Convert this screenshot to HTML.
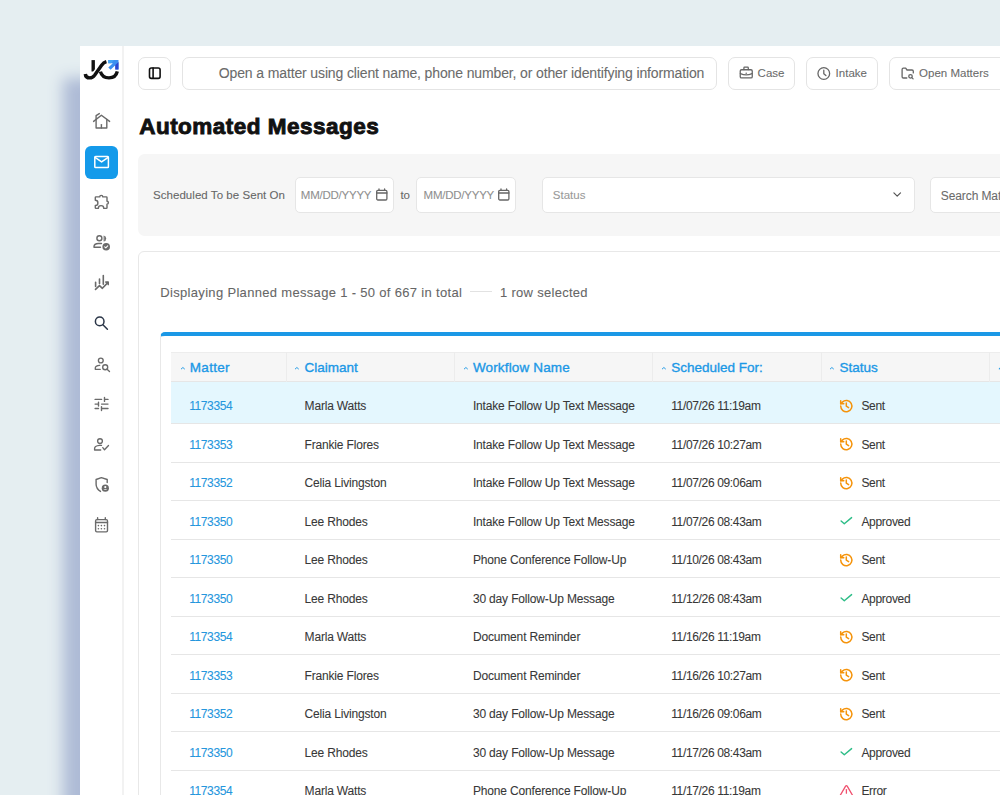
<!DOCTYPE html>
<html><head><meta charset="utf-8">
<style>
*{box-sizing:border-box;margin:0;padding:0}
html,body{width:1000px;height:795px;overflow:hidden;background:#e5eef1;font-family:"Liberation Sans",sans-serif;position:relative}
.a{position:absolute}
.t{position:absolute;white-space:nowrap;-webkit-text-stroke:0.08px currentColor}
.b{position:absolute;border:1px solid #e4e4e4;border-radius:7px;background:#fff}
.i{position:absolute;border:1px solid #e6e6e6;border-radius:5px;background:#fff}
svg{overflow:visible}
</style></head>
<body>
<div class="a" style="left:80px;top:46px;width:960px;height:820px;box-shadow:-17px 32px 14px #aebbd6;background:#fff"></div>
<div class="a" style="left:122px;top:46px;width:2px;height:760px;background:#f2f2f2"></div>
<svg class="a" style="left:80px;top:52px;width:44px;height:36px" viewBox="0 0 44 36" fill="none" stroke="#6a6a6a" stroke-width="1.4" stroke-linecap="round" stroke-linejoin="round">
<path d="M11.5 8.1 H14.9 V19.5 H11.5 Z" fill="#111" stroke="none"/>
<path d="M13.2 23.8 L21.8 12.6" stroke="#fff" stroke-width="5.2" stroke-linecap="butt"/>
<path d="M5.3 22 Q5.6 25.9 9.8 25.9 Q12.6 25.9 14.6 23.2 L21.6 13.2 Q23.6 10.4 26.4 9.6" stroke="#111" stroke-width="3.4" stroke-linecap="butt"/>
<path d="M20.4 19.6 Q22.2 25.9 29 25.9 Q35.8 25.9 37.3 19.4" stroke="#111" stroke-width="3.4" stroke-linecap="butt"/>
<path d="M28.3 8.1 H38.5 V17.6 H35.3 V13.2 L30.6 17.8 L28.3 15.5 L32.8 11.2 H28.3 Z" fill="#3b8ff0" stroke="none"/>
<path d="M28.3 8.1 H34 L31 11.2 H28.3 Z" fill="#42a5f5" stroke="none"/>
<path d="M35.3 13.1 L38.5 10 V17.6 H35.3 Z" fill="#2b46cf" stroke="none"/>
</svg>
<svg class="a" style="left:89px;top:109px;width:24px;height:24px" viewBox="0 0 24 24" fill="none" stroke="#6a6a6a" stroke-width="1.4" stroke-linecap="round" stroke-linejoin="round"><path d="M4.6 12.4 L12.4 6.3 L20.6 12.4"/><path d="M7.1 10.5 V19 H17.8 V10.5"/><path d="M12.4 15.6 V19"/><path d="M7.1 10.3 V6.7 L10.3 4.6"/></svg>
<div class="a" style="left:85px;top:146px;width:33px;height:32.5px;border-radius:6px;background:#149aea"></div>
<svg class="a" style="left:89px;top:150px;width:24px;height:24px" viewBox="0 0 24 24" fill="none" stroke="#fff" stroke-width="1.5" stroke-linecap="round" stroke-linejoin="round"><rect x="5.8" y="6.6" width="13.6" height="11" rx="0.8"/><path d="M6 7.3 L12.6 11.9 L19.2 7.3"/></svg>
<svg class="a" style="left:89px;top:190px;width:24px;height:24px" viewBox="0 0 24 24" fill="none" stroke="#6a6a6a" stroke-width="1.4" stroke-linecap="round" stroke-linejoin="round"><path d="M7 6.9 H10.7 A1.55 1.55 0 0 1 13.8 6.9 H17.3 Q18 6.9 18 7.6 V11.3 A1.4 1.4 0 0 1 18 14.1 V17.7 Q18 18.4 17.3 18.4 H14.8 A2.75 2.75 0 0 0 9.3 18.4 H7 Q6.3 18.4 6.3 17.7 V15.5 A2.6 2.6 0 0 0 6.3 10.3 V7.6 Q6.3 6.9 7 6.9 Z"/></svg>
<svg class="a" style="left:89px;top:230px;width:24px;height:24px" viewBox="0 0 24 24" fill="none" stroke="#6a6a6a" stroke-width="1.4" stroke-linecap="round" stroke-linejoin="round"><circle cx="10.4" cy="8.3" r="2.5"/><path d="M14.6 5.5 A3.1 3.1 0 0 1 14.6 11.6 Z" fill="#6a6a6a" stroke="none"/><path d="M15.6 6.7 V10.4" stroke="#9a9a9a" stroke-width="0.7"/><path d="M12.5 13.5 H9.5 Q5 13.8 5 16.6 V17.3 H11.5"/><circle cx="17.2" cy="16.8" r="3.8" fill="#6a6a6a" stroke="none"/><path d="M15.7 16.9 L16.8 17.9 L18.7 15.9" stroke="#fff" stroke-width="1.1"/></svg>
<svg class="a" style="left:89px;top:271px;width:24px;height:24px" viewBox="0 0 24 24" fill="none" stroke="#6a6a6a" stroke-width="1.6" stroke-linecap="round" stroke-linejoin="round"><path d="M6.6 11.2 V15.4 M10.5 8 V12.6 M14.3 4.6 V13.3"/><path d="M6.5 18.4 L10.5 14.6 L13.4 17.3 L18.8 11.6"/><path d="M16.8 11.1 H19.2 V13.6"/></svg>
<svg class="a" style="left:89px;top:311px;width:24px;height:24px" viewBox="0 0 24 24" fill="none" stroke="#2b3648" stroke-width="1.5" stroke-linecap="round" stroke-linejoin="round"><circle cx="10.7" cy="10.4" r="4.3"/><path d="M13.9 13.7 L18.4 18.2"/></svg>
<svg class="a" style="left:89px;top:351px;width:24px;height:24px" viewBox="0 0 24 24" fill="none" stroke="#6a6a6a" stroke-width="1.35" stroke-linecap="round" stroke-linejoin="round"><circle cx="11.8" cy="9.5" r="2.4"/><path d="M10.7 14.3 Q6.3 14.6 6.3 17 V18.3 H11.3"/><circle cx="16.2" cy="16.2" r="2.5"/><path d="M18.1 18.2 L20.5 20.5"/></svg>
<svg class="a" style="left:89px;top:392px;width:24px;height:24px" viewBox="0 0 24 24" fill="none" stroke="#6a6a6a" stroke-width="1.4" stroke-linecap="round" stroke-linejoin="round"><path d="M6.1 7.4 H12.6 M15.5 7.4 H19 M15.5 5.5 V9.4 M6.1 12.1 H9.5 M9.5 10.3 V14 M12.6 12.1 H19 M6.1 16.5 H9.5 M12.5 14.6 V18.5 M12.5 16.5 H19"/></svg>
<svg class="a" style="left:89px;top:432px;width:24px;height:24px" viewBox="0 0 24 24" fill="none" stroke="#6a6a6a" stroke-width="1.35" stroke-linecap="round" stroke-linejoin="round"><circle cx="11" cy="9.1" r="2.4"/><path d="M12.5 13.4 H10.5 Q5.6 13.8 5.6 16.6 V18 H11.7"/><path d="M13.8 15.6 L15.5 17.8 L19.5 13.5"/></svg>
<svg class="a" style="left:89px;top:472px;width:24px;height:24px" viewBox="0 0 24 24" fill="none" stroke="#6a6a6a" stroke-width="1.4" stroke-linecap="round" stroke-linejoin="round"><path d="M11.5 19.4 Q7.1 16.5 7.1 12.2 V7.5 L12.4 5.6 L18.2 7.5 V10.6"/><circle cx="16.3" cy="16.2" r="3.6" fill="#6a6a6a" stroke="none"/><circle cx="16.3" cy="15.1" r="1.1" fill="#fff" stroke="none"/><path d="M14.4 17.9 Q16.3 15.9 18.2 17.9" fill="#ddd" stroke="none"/></svg>
<svg class="a" style="left:89px;top:513px;width:24px;height:24px" viewBox="0 0 24 24" fill="none" stroke="#6a6a6a" stroke-width="1.4" stroke-linecap="round" stroke-linejoin="round"><rect x="6.6" y="6.6" width="11.9" height="12.3" rx="1.3"/><path d="M6.6 9.5 H18.5 M8.6 4.8 V6.6 M16.3 4.8 V6.6"/><path d="M9.4 12.6 h.01 M12.4 12.6 h.01 M15.5 12.6 h.01 M9.4 15.7 h.01 M12.4 15.7 h.01 M15.5 15.7 h.01" stroke-width="1.6"/></svg>
<div class="b" style="left:138px;top:57px;width:33px;height:32.5px"></div>
<svg class="a" style="left:142px;top:61px;width:24px;height:24px" viewBox="0 0 24 24" fill="none" stroke="#111" stroke-width="1.6" stroke-linecap="round" stroke-linejoin="round"><rect x="7.5" y="6.95" width="10.6" height="10.4" rx="1.8"/><path d="M11.1 7 V17.3"/></svg>
<div class="b" style="left:182px;top:57px;width:535px;height:32.5px"></div>
<div class="t" style="left:218.8px;top:66.35px;font-size:14px;line-height:14px;color:#6b6b6b;letter-spacing:-0.13px">Open a matter using client name, phone number, or other identifying information</div>
<div class="b" style="left:728px;top:57px;width:67px;height:32.5px"></div>
<svg class="a" style="left:734px;top:61px;width:24px;height:24px" viewBox="0 0 24 24" fill="none" stroke="#666" stroke-width="1.3" stroke-linecap="round" stroke-linejoin="round"><rect x="6.25" y="8.75" width="12" height="8.2" rx="1.3"/><path d="M9.9 8.6 V6.9 Q9.9 6.2 10.6 6.2 H13.6 Q14.3 6.2 14.3 6.9 V8.6"/><path d="M6.4 12.6 Q12.2 15.1 18 12.6"/><path d="M12.2 12.3 h.01" stroke-width="1.5"/></svg>
<div class="t" style="left:757.6px;top:68.07px;font-size:11.5px;line-height:11.5px;color:#6b6b6b">Case</div>
<div class="b" style="left:806px;top:57px;width:72px;height:32.5px"></div>
<svg class="a" style="left:812px;top:62px;width:24px;height:24px" viewBox="0 0 24 24" fill="none" stroke="#666" stroke-width="1.3" stroke-linecap="round" stroke-linejoin="round"><circle cx="11.8" cy="11.5" r="5.85"/><path d="M11.8 8.2 V11.7 L13.9 13.6"/></svg>
<div class="t" style="left:835.6px;top:67.87px;font-size:11.5px;line-height:11.5px;color:#6b6b6b">Intake</div>
<div class="b" style="left:889px;top:57px;width:130px;height:32.5px"></div>
<svg class="a" style="left:896px;top:61px;width:24px;height:24px" viewBox="0 0 24 24" fill="none" stroke="#666" stroke-width="1.3" stroke-linecap="round" stroke-linejoin="round"><path d="M10.8 17 H7.4 Q6.1 17 6.1 15.7 V8.5 Q6.1 7.2 7.4 7.2 H9.7 L11 9 H16 Q17.3 9 17.3 10.3 V11.9"/><circle cx="14.5" cy="15.3" r="1.75"/><path d="M15.8 16.6 L17.1 17.9"/></svg>
<div class="t" style="left:919.1px;top:67.87px;font-size:11.5px;line-height:11.5px;color:#6b6b6b">Open Matters</div>
<div class="t" style="left:139.2px;top:115.55px;font-size:22.5px;line-height:22.5px;color:#111;font-weight:bold;letter-spacing:0.48px;-webkit-text-stroke:0.9px #111">Automated Messages</div>
<div class="a" style="left:138px;top:154px;width:880px;height:82px;background:#f6f6f6;border-radius:6.5px"></div>
<div class="t" style="left:153px;top:189.77px;font-size:11.5px;line-height:11.5px;color:#666;letter-spacing:0.05px">Scheduled To be Sent On</div>
<div class="i" style="left:295px;top:177px;width:99px;height:35.5px"></div>
<div class="t" style="left:300.8px;top:189.77px;font-size:11.5px;line-height:11.5px;color:#8f8f8f;letter-spacing:-0.24px">MM/DD/YYYY</div>
<svg class="a" style="left:374.5px;top:188px;width:14px;height:14px" viewBox="0 0 14 14" fill="none" stroke="#666" stroke-width="1.3" stroke-linecap="round" stroke-linejoin="round"><rect x="1.7" y="2.4" width="10.2" height="9.6" rx="1.2"/><path d="M1.7 5 H11.9 M4 1 V2.4 M9.6 1 V2.4"/></svg>
<div class="t" style="left:400.4px;top:189.77px;font-size:11.5px;line-height:11.5px;color:#666">to</div>
<div class="i" style="left:416px;top:177px;width:100px;height:35.5px"></div>
<div class="t" style="left:423.6px;top:189.77px;font-size:11.5px;line-height:11.5px;color:#8f8f8f;letter-spacing:-0.24px">MM/DD/YYYY</div>
<svg class="a" style="left:497px;top:188px;width:14px;height:14px" viewBox="0 0 14 14" fill="none" stroke="#666" stroke-width="1.3" stroke-linecap="round" stroke-linejoin="round"><rect x="1.7" y="2.4" width="10.2" height="9.6" rx="1.2"/><path d="M1.7 5 H11.9 M4 1 V2.4 M9.6 1 V2.4"/></svg>
<div class="i" style="left:541.5px;top:177px;width:373px;height:35.5px"></div>
<div class="t" style="left:552.8px;top:189.77px;font-size:11.5px;line-height:11.5px;color:#999">Status</div>
<svg class="a" style="left:890px;top:188px;width:14px;height:14px" viewBox="0 0 14 14" fill="none" stroke="#555" stroke-width="1.2" stroke-linecap="round" stroke-linejoin="round"><path d="M3.9 4.9 L7.2 8.2 L10.5 4.9"/></svg>
<div class="i" style="left:930px;top:177px;width:100px;height:35.5px"></div>
<div class="t" style="left:940.8px;top:189.64px;font-size:12px;line-height:12px;color:#6b6b6b;letter-spacing:-0.1px">Search Matter</div>
<div class="a" style="left:138px;top:251px;width:900px;height:600px;border:1px solid #e8e8e8;border-radius:6px"></div>
<div class="t" style="left:160.3px;top:285.60px;font-size:13px;line-height:13px;color:#666;letter-spacing:0.32px">Displaying Planned message 1 - 50 of 667 in total</div>
<div class="a" style="left:470px;top:290.6px;width:22px;height:1.6px;background:#e2e2e2"></div>
<div class="t" style="left:500px;top:285.60px;font-size:13px;line-height:13px;color:#666;letter-spacing:0.29px">1 row selected</div>
<div class="a" style="left:160px;top:331.5px;width:900px;height:600px;border-left:1px solid #e8e8e8;border-top:4px solid #1b98e6;border-top-left-radius:5px"></div>
<div class="a" style="left:171px;top:351.5px;width:860px;height:30px;background:#f6f6f6;border-top:1px solid #ededed;border-bottom:1px solid #e6e6e6"></div>
<div class="a" style="left:286px;top:352px;width:1px;height:29.5px;background:#ececec"></div>
<div class="a" style="left:454px;top:352px;width:1px;height:29.5px;background:#ececec"></div>
<div class="a" style="left:652px;top:352px;width:1px;height:29.5px;background:#ececec"></div>
<div class="a" style="left:821px;top:352px;width:1px;height:29.5px;background:#ececec"></div>
<div class="a" style="left:989px;top:352px;width:1px;height:29.5px;background:#ececec"></div>
<svg class="a" style="left:179.60000000000002px;top:366.3px;width:6px;height:5px" viewBox="0 0 6 5" fill="none" stroke="#1b98e6" stroke-width="0.95" stroke-linecap="round" stroke-linejoin="round"><path d="M1.3 2.9 L2.9 1.5 L4.5 2.9"/></svg>
<div class="t" style="left:189.8px;top:360.77px;font-size:13.5px;line-height:13.5px;color:#1b98e6;letter-spacing:0.3px;-webkit-text-stroke:0.35px #1b98e6">Matter</div>
<svg class="a" style="left:294.40000000000003px;top:366.3px;width:6px;height:5px" viewBox="0 0 6 5" fill="none" stroke="#1b98e6" stroke-width="0.95" stroke-linecap="round" stroke-linejoin="round"><path d="M1.3 2.9 L2.9 1.5 L4.5 2.9"/></svg>
<div class="t" style="left:304.6px;top:360.77px;font-size:13.5px;line-height:13.5px;color:#1b98e6;-webkit-text-stroke:0.35px #1b98e6">Claimant</div>
<svg class="a" style="left:462.7px;top:366.3px;width:6px;height:5px" viewBox="0 0 6 5" fill="none" stroke="#1b98e6" stroke-width="0.95" stroke-linecap="round" stroke-linejoin="round"><path d="M1.3 2.9 L2.9 1.5 L4.5 2.9"/></svg>
<div class="t" style="left:472.9px;top:360.77px;font-size:13.5px;line-height:13.5px;color:#1b98e6;letter-spacing:0.15px;-webkit-text-stroke:0.35px #1b98e6">Workflow Name</div>
<svg class="a" style="left:661.0px;top:366.3px;width:6px;height:5px" viewBox="0 0 6 5" fill="none" stroke="#1b98e6" stroke-width="0.95" stroke-linecap="round" stroke-linejoin="round"><path d="M1.3 2.9 L2.9 1.5 L4.5 2.9"/></svg>
<div class="t" style="left:671.2px;top:360.77px;font-size:13.5px;line-height:13.5px;color:#1b98e6;-webkit-text-stroke:0.35px #1b98e6">Scheduled For:</div>
<svg class="a" style="left:829.4px;top:366.3px;width:6px;height:5px" viewBox="0 0 6 5" fill="none" stroke="#1b98e6" stroke-width="0.95" stroke-linecap="round" stroke-linejoin="round"><path d="M1.3 2.9 L2.9 1.5 L4.5 2.9"/></svg>
<div class="t" style="left:839.6px;top:360.77px;font-size:13.5px;line-height:13.5px;color:#1b98e6;-webkit-text-stroke:0.35px #1b98e6">Status</div>
<svg class="a" style="left:997.5px;top:366.3px;width:6px;height:5px" viewBox="0 0 6 5" fill="none" stroke="#1b98e6" stroke-width="1.1" stroke-linecap="round" stroke-linejoin="round"><path d="M1.3 2.9 L2.9 1.5 L4.5 2.9"/></svg>
<div class="a" style="left:171px;top:381.5px;width:860px;height:42px;background:#e4f7fe"></div>
<div class="a" style="left:171px;top:423.30px;width:860px;height:1px;background:#e6e6e6"></div>
<div class="t" style="left:189.20000000000002px;top:400.44px;font-size:12px;line-height:12px;color:#2596dd;letter-spacing:-0.4px">1173354</div>
<div class="t" style="left:304.6px;top:400.44px;font-size:12px;line-height:12px;color:#383838;letter-spacing:-0.18px">Marla Watts</div>
<div class="t" style="left:472.9px;top:400.44px;font-size:12px;line-height:12px;color:#383838;letter-spacing:-0.16px">Intake Follow Up Text Message</div>
<div class="t" style="left:671.2px;top:400.44px;font-size:12px;line-height:12px;color:#383838;letter-spacing:-0.35px">11/07/26 11:19am</div>
<svg class="a" style="left:839.3px;top:398.8px;width:14px;height:14px" viewBox="0 0 14 14" fill="none" stroke="#f5930a" stroke-width="1.5" stroke-linecap="round" stroke-linejoin="round"><path d="M1.7 7.1 A5.6 5.6 0 1 0 3.4 3.1 L1.7 4.8"/><path d="M1.7 1.7 V4.8 H4.8"/><path d="M7.3 4.1 V7.2 L9.6 8.7"/></svg>
<div class="t" style="left:861.4px;top:400.44px;font-size:12px;line-height:12px;color:#383838;letter-spacing:-0.3px">Sent</div>
<div class="a" style="left:171px;top:461.80px;width:860px;height:1px;background:#e6e6e6"></div>
<div class="t" style="left:189.20000000000002px;top:438.94px;font-size:12px;line-height:12px;color:#2596dd;letter-spacing:-0.4px">1173353</div>
<div class="t" style="left:304.6px;top:438.94px;font-size:12px;line-height:12px;color:#383838;letter-spacing:-0.18px">Frankie Flores</div>
<div class="t" style="left:472.9px;top:438.94px;font-size:12px;line-height:12px;color:#383838;letter-spacing:-0.16px">Intake Follow Up Text Message</div>
<div class="t" style="left:671.2px;top:438.94px;font-size:12px;line-height:12px;color:#383838;letter-spacing:-0.35px">11/07/26 10:27am</div>
<svg class="a" style="left:839.3px;top:437.3px;width:14px;height:14px" viewBox="0 0 14 14" fill="none" stroke="#f5930a" stroke-width="1.5" stroke-linecap="round" stroke-linejoin="round"><path d="M1.7 7.1 A5.6 5.6 0 1 0 3.4 3.1 L1.7 4.8"/><path d="M1.7 1.7 V4.8 H4.8"/><path d="M7.3 4.1 V7.2 L9.6 8.7"/></svg>
<div class="t" style="left:861.4px;top:438.94px;font-size:12px;line-height:12px;color:#383838;letter-spacing:-0.3px">Sent</div>
<div class="a" style="left:171px;top:500.30px;width:860px;height:1px;background:#e6e6e6"></div>
<div class="t" style="left:189.20000000000002px;top:477.44px;font-size:12px;line-height:12px;color:#2596dd;letter-spacing:-0.4px">1173352</div>
<div class="t" style="left:304.6px;top:477.44px;font-size:12px;line-height:12px;color:#383838;letter-spacing:-0.18px">Celia Livingston</div>
<div class="t" style="left:472.9px;top:477.44px;font-size:12px;line-height:12px;color:#383838;letter-spacing:-0.16px">Intake Follow Up Text Message</div>
<div class="t" style="left:671.2px;top:477.44px;font-size:12px;line-height:12px;color:#383838;letter-spacing:-0.35px">11/07/26 09:06am</div>
<svg class="a" style="left:839.3px;top:475.8px;width:14px;height:14px" viewBox="0 0 14 14" fill="none" stroke="#f5930a" stroke-width="1.5" stroke-linecap="round" stroke-linejoin="round"><path d="M1.7 7.1 A5.6 5.6 0 1 0 3.4 3.1 L1.7 4.8"/><path d="M1.7 1.7 V4.8 H4.8"/><path d="M7.3 4.1 V7.2 L9.6 8.7"/></svg>
<div class="t" style="left:861.4px;top:477.44px;font-size:12px;line-height:12px;color:#383838;letter-spacing:-0.3px">Sent</div>
<div class="a" style="left:171px;top:538.80px;width:860px;height:1px;background:#e6e6e6"></div>
<div class="t" style="left:189.20000000000002px;top:515.94px;font-size:12px;line-height:12px;color:#2596dd;letter-spacing:-0.4px">1173350</div>
<div class="t" style="left:304.6px;top:515.94px;font-size:12px;line-height:12px;color:#383838;letter-spacing:-0.18px">Lee Rhodes</div>
<div class="t" style="left:472.9px;top:515.94px;font-size:12px;line-height:12px;color:#383838;letter-spacing:-0.16px">Intake Follow Up Text Message</div>
<div class="t" style="left:671.2px;top:515.94px;font-size:12px;line-height:12px;color:#383838;letter-spacing:-0.35px">11/07/26 08:43am</div>
<svg class="a" style="left:839.3px;top:514.3px;width:14px;height:14px" viewBox="0 0 14 14" fill="none" stroke="#2dbd87" stroke-width="1.4" stroke-linecap="round" stroke-linejoin="round"><path d="M12.6 3.6 L5.3 9.8 L2.1 6.9"/></svg>
<div class="t" style="left:861.4px;top:515.94px;font-size:12px;line-height:12px;color:#383838;letter-spacing:-0.3px">Approved</div>
<div class="a" style="left:171px;top:577.30px;width:860px;height:1px;background:#e6e6e6"></div>
<div class="t" style="left:189.20000000000002px;top:554.44px;font-size:12px;line-height:12px;color:#2596dd;letter-spacing:-0.4px">1173350</div>
<div class="t" style="left:304.6px;top:554.44px;font-size:12px;line-height:12px;color:#383838;letter-spacing:-0.18px">Lee Rhodes</div>
<div class="t" style="left:472.9px;top:554.44px;font-size:12px;line-height:12px;color:#383838;letter-spacing:-0.16px">Phone Conference Follow-Up</div>
<div class="t" style="left:671.2px;top:554.44px;font-size:12px;line-height:12px;color:#383838;letter-spacing:-0.35px">11/10/26 08:43am</div>
<svg class="a" style="left:839.3px;top:552.8px;width:14px;height:14px" viewBox="0 0 14 14" fill="none" stroke="#f5930a" stroke-width="1.5" stroke-linecap="round" stroke-linejoin="round"><path d="M1.7 7.1 A5.6 5.6 0 1 0 3.4 3.1 L1.7 4.8"/><path d="M1.7 1.7 V4.8 H4.8"/><path d="M7.3 4.1 V7.2 L9.6 8.7"/></svg>
<div class="t" style="left:861.4px;top:554.44px;font-size:12px;line-height:12px;color:#383838;letter-spacing:-0.3px">Sent</div>
<div class="a" style="left:171px;top:615.80px;width:860px;height:1px;background:#e6e6e6"></div>
<div class="t" style="left:189.20000000000002px;top:592.94px;font-size:12px;line-height:12px;color:#2596dd;letter-spacing:-0.4px">1173350</div>
<div class="t" style="left:304.6px;top:592.94px;font-size:12px;line-height:12px;color:#383838;letter-spacing:-0.18px">Lee Rhodes</div>
<div class="t" style="left:472.9px;top:592.94px;font-size:12px;line-height:12px;color:#383838;letter-spacing:-0.16px">30 day Follow-Up Message</div>
<div class="t" style="left:671.2px;top:592.94px;font-size:12px;line-height:12px;color:#383838;letter-spacing:-0.35px">11/12/26 08:43am</div>
<svg class="a" style="left:839.3px;top:591.3px;width:14px;height:14px" viewBox="0 0 14 14" fill="none" stroke="#2dbd87" stroke-width="1.4" stroke-linecap="round" stroke-linejoin="round"><path d="M12.6 3.6 L5.3 9.8 L2.1 6.9"/></svg>
<div class="t" style="left:861.4px;top:592.94px;font-size:12px;line-height:12px;color:#383838;letter-spacing:-0.3px">Approved</div>
<div class="a" style="left:171px;top:654.30px;width:860px;height:1px;background:#e6e6e6"></div>
<div class="t" style="left:189.20000000000002px;top:631.44px;font-size:12px;line-height:12px;color:#2596dd;letter-spacing:-0.4px">1173354</div>
<div class="t" style="left:304.6px;top:631.44px;font-size:12px;line-height:12px;color:#383838;letter-spacing:-0.18px">Marla Watts</div>
<div class="t" style="left:472.9px;top:631.44px;font-size:12px;line-height:12px;color:#383838;letter-spacing:-0.16px">Document Reminder</div>
<div class="t" style="left:671.2px;top:631.44px;font-size:12px;line-height:12px;color:#383838;letter-spacing:-0.35px">11/16/26 11:19am</div>
<svg class="a" style="left:839.3px;top:629.8px;width:14px;height:14px" viewBox="0 0 14 14" fill="none" stroke="#f5930a" stroke-width="1.5" stroke-linecap="round" stroke-linejoin="round"><path d="M1.7 7.1 A5.6 5.6 0 1 0 3.4 3.1 L1.7 4.8"/><path d="M1.7 1.7 V4.8 H4.8"/><path d="M7.3 4.1 V7.2 L9.6 8.7"/></svg>
<div class="t" style="left:861.4px;top:631.44px;font-size:12px;line-height:12px;color:#383838;letter-spacing:-0.3px">Sent</div>
<div class="a" style="left:171px;top:692.80px;width:860px;height:1px;background:#e6e6e6"></div>
<div class="t" style="left:189.20000000000002px;top:669.94px;font-size:12px;line-height:12px;color:#2596dd;letter-spacing:-0.4px">1173353</div>
<div class="t" style="left:304.6px;top:669.94px;font-size:12px;line-height:12px;color:#383838;letter-spacing:-0.18px">Frankie Flores</div>
<div class="t" style="left:472.9px;top:669.94px;font-size:12px;line-height:12px;color:#383838;letter-spacing:-0.16px">Document Reminder</div>
<div class="t" style="left:671.2px;top:669.94px;font-size:12px;line-height:12px;color:#383838;letter-spacing:-0.35px">11/16/26 10:27am</div>
<svg class="a" style="left:839.3px;top:668.3px;width:14px;height:14px" viewBox="0 0 14 14" fill="none" stroke="#f5930a" stroke-width="1.5" stroke-linecap="round" stroke-linejoin="round"><path d="M1.7 7.1 A5.6 5.6 0 1 0 3.4 3.1 L1.7 4.8"/><path d="M1.7 1.7 V4.8 H4.8"/><path d="M7.3 4.1 V7.2 L9.6 8.7"/></svg>
<div class="t" style="left:861.4px;top:669.94px;font-size:12px;line-height:12px;color:#383838;letter-spacing:-0.3px">Sent</div>
<div class="a" style="left:171px;top:731.30px;width:860px;height:1px;background:#e6e6e6"></div>
<div class="t" style="left:189.20000000000002px;top:708.44px;font-size:12px;line-height:12px;color:#2596dd;letter-spacing:-0.4px">1173352</div>
<div class="t" style="left:304.6px;top:708.44px;font-size:12px;line-height:12px;color:#383838;letter-spacing:-0.18px">Celia Livingston</div>
<div class="t" style="left:472.9px;top:708.44px;font-size:12px;line-height:12px;color:#383838;letter-spacing:-0.16px">30 day Follow-Up Message</div>
<div class="t" style="left:671.2px;top:708.44px;font-size:12px;line-height:12px;color:#383838;letter-spacing:-0.35px">11/16/26 09:06am</div>
<svg class="a" style="left:839.3px;top:706.8px;width:14px;height:14px" viewBox="0 0 14 14" fill="none" stroke="#f5930a" stroke-width="1.5" stroke-linecap="round" stroke-linejoin="round"><path d="M1.7 7.1 A5.6 5.6 0 1 0 3.4 3.1 L1.7 4.8"/><path d="M1.7 1.7 V4.8 H4.8"/><path d="M7.3 4.1 V7.2 L9.6 8.7"/></svg>
<div class="t" style="left:861.4px;top:708.44px;font-size:12px;line-height:12px;color:#383838;letter-spacing:-0.3px">Sent</div>
<div class="a" style="left:171px;top:769.80px;width:860px;height:1px;background:#e6e6e6"></div>
<div class="t" style="left:189.20000000000002px;top:746.94px;font-size:12px;line-height:12px;color:#2596dd;letter-spacing:-0.4px">1173350</div>
<div class="t" style="left:304.6px;top:746.94px;font-size:12px;line-height:12px;color:#383838;letter-spacing:-0.18px">Lee Rhodes</div>
<div class="t" style="left:472.9px;top:746.94px;font-size:12px;line-height:12px;color:#383838;letter-spacing:-0.16px">30 day Follow-Up Message</div>
<div class="t" style="left:671.2px;top:746.94px;font-size:12px;line-height:12px;color:#383838;letter-spacing:-0.35px">11/17/26 08:43am</div>
<svg class="a" style="left:839.3px;top:745.3px;width:14px;height:14px" viewBox="0 0 14 14" fill="none" stroke="#2dbd87" stroke-width="1.4" stroke-linecap="round" stroke-linejoin="round"><path d="M12.6 3.6 L5.3 9.8 L2.1 6.9"/></svg>
<div class="t" style="left:861.4px;top:746.94px;font-size:12px;line-height:12px;color:#383838;letter-spacing:-0.3px">Approved</div>
<div class="a" style="left:171px;top:808.30px;width:860px;height:1px;background:#e6e6e6"></div>
<div class="t" style="left:189.20000000000002px;top:785.44px;font-size:12px;line-height:12px;color:#2596dd;letter-spacing:-0.4px">1173354</div>
<div class="t" style="left:304.6px;top:785.44px;font-size:12px;line-height:12px;color:#383838;letter-spacing:-0.18px">Marla Watts</div>
<div class="t" style="left:472.9px;top:785.44px;font-size:12px;line-height:12px;color:#383838;letter-spacing:-0.16px">Phone Conference Follow-Up</div>
<div class="t" style="left:671.2px;top:785.44px;font-size:12px;line-height:12px;color:#383838;letter-spacing:-0.35px">11/17/26 11:19am</div>
<svg class="a" style="left:839.3px;top:783.8px;width:15px;height:15px" viewBox="0 0 15 15" fill="none" stroke="#f0506e" stroke-width="1.3" stroke-linecap="round" stroke-linejoin="round"><path d="M8.2 2.2 L14.3 12.6 Q15 13.9 13.6 13.9 H1.2 Q-0.2 13.9 0.5 12.6 L6.6 2.2 Q7.4 0.9 8.2 2.2 Z"/><path d="M7.4 5.6 V9.2"/><path d="M7.4 11.6 h.01"/></svg>
<div class="t" style="left:861.4px;top:785.44px;font-size:12px;line-height:12px;color:#383838;letter-spacing:-0.3px">Error</div>
</body></html>
